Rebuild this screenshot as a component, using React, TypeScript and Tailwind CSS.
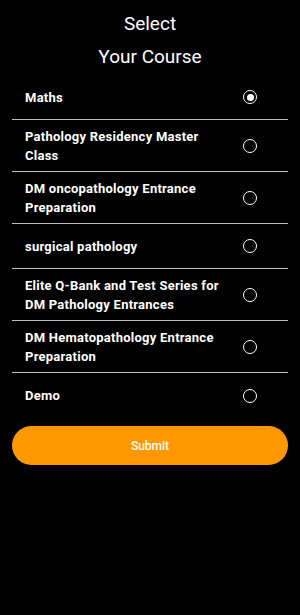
import React, { useState } from "react";

const courses = [
  "Maths",
  "Pathology Residency Master Class",
  "DM oncopathology Entrance Preparation",
  "surgical pathology",
  "Elite Q-Bank and Test Series for DM Pathology Entrances",
  "DM Hematopathology Entrance Preparation",
  "Demo",
];

function Radio({ checked }: { checked: boolean }) {
  return (
    <div className="w-[14px] h-[14px] rounded-full border-[1.8px] border-white flex items-center justify-center shrink-0">
      {checked && <div className="w-[7px] h-[7px] rounded-full bg-white" />}
    </div>
  );
}

export default function App() {
  const [sel, setSel] = useState(0);
  return (
    <div
      className="w-[300px] h-[615px] bg-black text-white flex flex-col"
      style={{ fontFamily: "Roboto, 'Noto Sans', sans-serif" }}
    >
      <div className="flex flex-col items-center pt-[11px]">
        <div className="text-[19px] leading-[26px]">Select</div>
        <div className="text-[19px] leading-[26px] mt-[7px]">Your Course</div>
      </div>
      <div className="mx-[12px] mt-[5px] flex flex-col">
        {courses.map((c, i) => (
          <div
            key={c}
            onClick={() => setSel(i)}
            className={`flex items-center min-h-[45px] py-[6.5px] pl-[13px] pr-[31px] ${
              i < courses.length - 1 ? "border-b border-[#bdbdbd]" : ""
            }`}
          >
            <div className="flex-1">
              <div className="max-w-[198px] text-[13px] tracking-[0.25px] font-bold leading-[19px]">{c}</div>
            </div>
            <Radio checked={sel === i} />
          </div>
        ))}
      </div>
      <div className="mx-[12px] mt-[8px]">
        <button className="w-full h-[39px] rounded-full bg-[#ff9800] text-white text-[12px] font-medium">
          Submit
        </button>
      </div>
    </div>
  );
}
